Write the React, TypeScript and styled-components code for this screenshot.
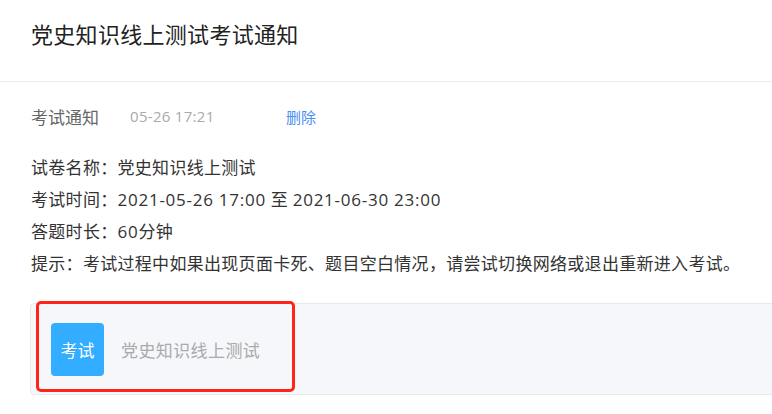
import React from 'react'
import styled, {createGlobalStyle} from 'styled-components'

const GlobalStyle = createGlobalStyle`
    html, body {
        margin: 0;
        padding: 0;
        background: #fff;
        overflow: hidden;
    }
    body {
        font-family: "Open Sans", "Noto Sans CJK SC", sans-serif;
    }
`

const Page = styled.div`
    width: 772px;
    height: 414px;
    background: #fff;
`

const Header = styled.div`
    padding: 20px 31px 33px;
    border-bottom: 1px solid #ededed;
`

const Title = styled.h1`
    margin: 0;
    font-size: 22px;
    line-height: 28px;
    font-weight: 400;
    color: #222;
    letter-spacing: 0.3px;
`

const MetaRow = styled.div`
    display: flex;
    align-items: center;
    margin: 22px 0 0 31px;
    height: 24px;
`

const MetaLabel = styled.span`
    width: 99px;
    font-size: 17px;
    color: #666;
`

const MetaDate = styled.span`
    width: 156px;
    font-size: 15px;
    color: #aaa;
    letter-spacing: 0.3px;
`

const DeleteLink = styled.a`
    font-size: 15px;
    color: #4b8ff7;
    cursor: pointer;
`

const InfoList = styled.div`
    margin: 24px 0 0 31px;
`

const InfoLine = styled.div`
    font-size: 17px;
    line-height: 32px;
    color: #333;
    letter-spacing: 0.3px;
    white-space: nowrap;
`

// digits in the reference run a little wider than Open Sans
const Num = styled.span`
    letter-spacing: 0.75px;
`

const Card = styled.div`
    position: relative;
    display: flex;
    align-items: center;
    gap: 17px;
    margin: 23px -10px 0 30px;
    padding: 19px 20px 18px;
    background: #f5f7fa;
    border: 1px solid #e6e9ee;
    border-radius: 4px;
`

const Badge = styled.div`
    width: 53px;
    height: 53px;
    border-radius: 4px;
    background: #33adff;
    color: #fff;
    font-size: 17px;
    display: flex;
    align-items: center;
    justify-content: center;
    flex-shrink: 0;
`

const CardText = styled.span`
    font-size: 17px;
    color: #aaa;
    letter-spacing: 0.4px;
`

const Highlight = styled.div`
    position: absolute;
    left: 5px;
    top: -3px;
    width: 253px;
    height: 85px;
    border: 3px solid #ff2418;
    border-radius: 5px;
    pointer-events: none;
`

export default function App() {
    return (
        <Page>
            <GlobalStyle />
            <Header>
                <Title>党史知识线上测试考试通知</Title>
            </Header>
            <MetaRow>
                <MetaLabel>考试通知</MetaLabel>
                <MetaDate>05-26 17:21</MetaDate>
                <DeleteLink>删除</DeleteLink>
            </MetaRow>
            <InfoList>
                <InfoLine>试卷名称：党史知识线上测试</InfoLine>
                <InfoLine>
                    考试时间：<Num>2021-05-26 17:00</Num> 至 <Num>2021-06-30 23:00</Num>
                </InfoLine>
                <InfoLine>
                    答题时长：<Num>60</Num>分钟
                </InfoLine>
                <InfoLine>提示：考试过程中如果出现页面卡死、题目空白情况，请尝试切换网络或退出重新进入考试。</InfoLine>
            </InfoList>
            <Card>
                <Badge>考试</Badge>
                <CardText>党史知识线上测试</CardText>
                <Highlight />
            </Card>
        </Page>
    )
}
